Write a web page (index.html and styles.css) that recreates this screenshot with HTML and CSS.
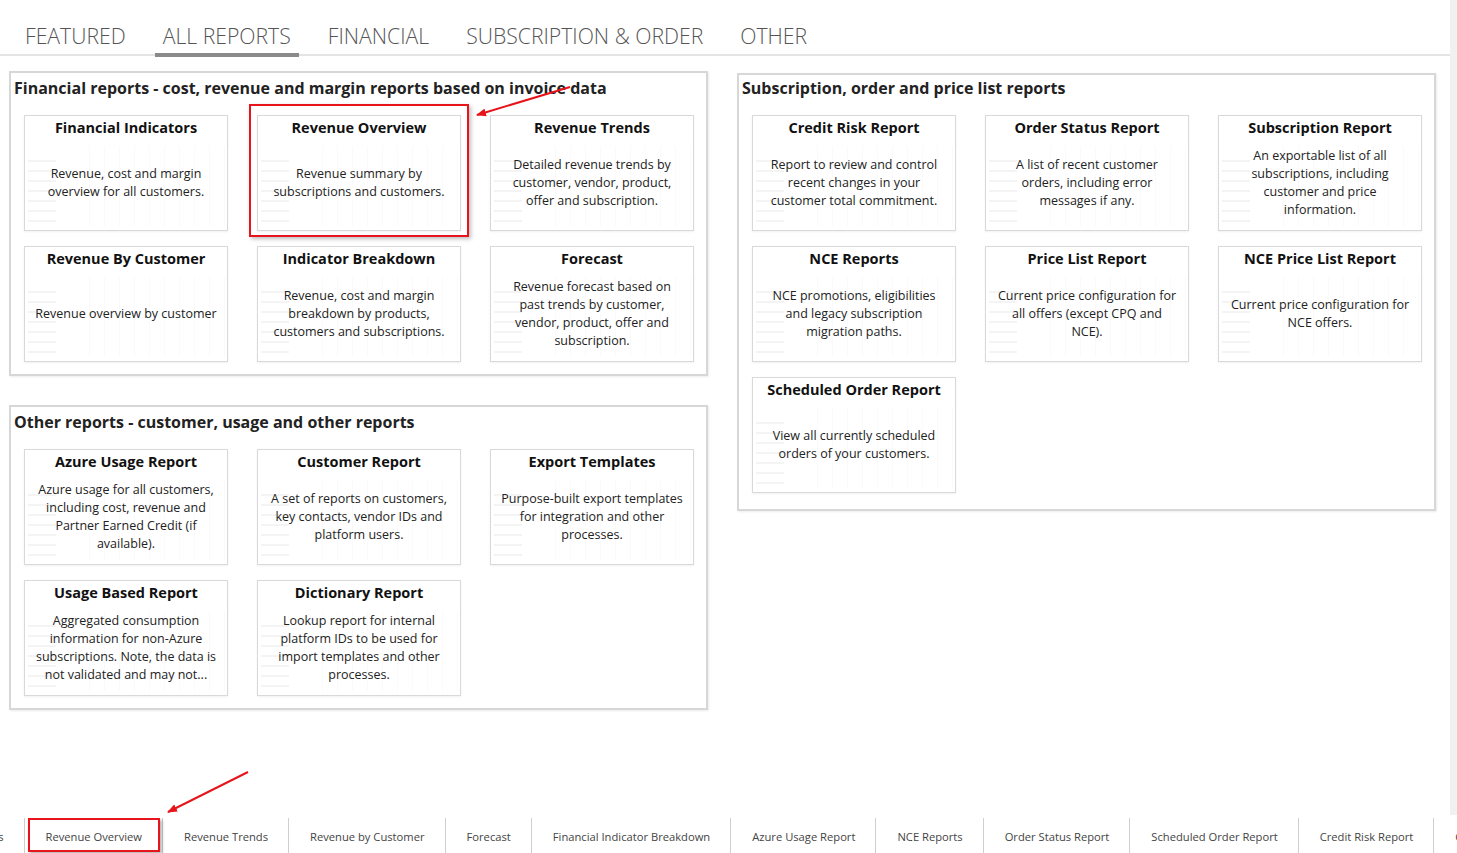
FILE: index.html
```html
<!DOCTYPE html>
<html lang="en">
<head>
    <meta charset="UTF-8">
    <meta name="viewport" content="width=device-width, initial-scale=1.0">
    <link rel="stylesheet" href="styles.css">
</head>
<body>
<div class="page">
    <div class="tabs">
        <span class="tab">FEATURED</span>
        <span class="tab active">ALL REPORTS</span>
        <span class="tab">FINANCIAL</span>
        <span class="tab">SUBSCRIPTION &amp; ORDER</span>
        <span class="tab">OTHER</span>
    </div>

    <div class="main">
        <div class="left-col">
            <div class="panel">
                <h2>Financial reports - cost, revenue and margin reports based on invoice data</h2>
                <div class="cards">
                    <div class="card">
                        <h3>Financial Indicators</h3>
                        <p>Revenue, cost and margin overview for all customers.</p>
                    </div>
                    <div class="card highlight">
                        <h3>Revenue Overview</h3>
                        <p>Revenue summary by subscriptions and customers.</p>
                    </div>
                    <div class="card">
                        <h3>Revenue Trends</h3>
                        <p>Detailed revenue trends by customer, vendor, product, offer and subscription.</p>
                    </div>
                    <div class="card">
                        <h3>Revenue By Customer</h3>
                        <p>Revenue overview by customer</p>
                    </div>
                    <div class="card">
                        <h3>Indicator Breakdown</h3>
                        <p>Revenue, cost and margin breakdown by products, customers and subscriptions.</p>
                    </div>
                    <div class="card">
                        <h3>Forecast</h3>
                        <p>Revenue forecast based on past trends by customer, vendor, product, offer and subscription.</p>
                    </div>
                </div>
            </div>

            <div class="panel">
                <h2>Other reports - customer, usage and other reports</h2>
                <div class="cards">
                    <div class="card">
                        <h3>Azure Usage Report</h3>
                        <p>Azure usage for all customers, including cost, revenue and Partner Earned Credit (if available).</p>
                    </div>
                    <div class="card">
                        <h3>Customer Report</h3>
                        <p>A set of reports on customers, key contacts, vendor IDs and platform users.</p>
                    </div>
                    <div class="card">
                        <h3>Export Templates</h3>
                        <p>Purpose-built export templates for integration and other processes.</p>
                    </div>
                    <div class="card">
                        <h3>Usage Based Report</h3>
                        <p>Aggregated consumption information for non-Azure subscriptions. Note, the data is not validated and may not...</p>
                    </div>
                    <div class="card">
                        <h3>Dictionary Report</h3>
                        <p>Lookup report for internal platform IDs to be used for import templates and other processes.</p>
                    </div>
                </div>
            </div>
        </div>

        <div class="panel right">
            <h2>Subscription, order and price list reports</h2>
            <div class="cards">
                <div class="card">
                    <h3>Credit Risk Report</h3>
                    <p>Report to review and control recent changes in your customer total commitment.</p>
                </div>
                <div class="card">
                    <h3>Order Status Report</h3>
                    <p>A list of recent customer orders, including error messages if any.</p>
                </div>
                <div class="card">
                    <h3>Subscription Report</h3>
                    <p>An exportable list of all subscriptions, including customer and price information.</p>
                </div>
                <div class="card">
                    <h3>NCE Reports</h3>
                    <p>NCE promotions, eligibilities and legacy subscription migration paths.</p>
                </div>
                <div class="card">
                    <h3>Price List Report</h3>
                    <p>Current price configuration for all offers (except CPQ and NCE).</p>
                </div>
                <div class="card">
                    <h3>NCE Price List Report</h3>
                    <p>Current price configuration for NCE offers.</p>
                </div>
                <div class="card">
                    <h3>Scheduled Order Report</h3>
                    <p>View all currently scheduled orders of your customers.</p>
                </div>
            </div>
        </div>
    </div>

    <div class="scrollbar"></div>

    <div class="pages">
        <div class="pages-inner">
            <span class="page-tab">Financial Indicators</span>
            <span class="page-tab highlight">Revenue Overview</span>
            <span class="page-tab">Revenue Trends</span>
            <span class="page-tab">Revenue by Customer</span>
            <span class="page-tab">Forecast</span>
            <span class="page-tab">Financial Indicator Breakdown</span>
            <span class="page-tab">Azure Usage Report</span>
            <span class="page-tab">NCE Reports</span>
            <span class="page-tab">Order Status Report</span>
            <span class="page-tab">Scheduled Order Report</span>
            <span class="page-tab">Credit Risk Report</span>
            <span class="page-tab">Customer Report</span>
        </div>
    </div>

    <!-- annotation arrows drawn over the screenshot -->
    <svg class="arrows" width="1457" height="853" viewBox="0 0 1457 853">
        <defs>
            <marker id="head" markerWidth="10" markerHeight="8" refX="9" refY="4" orient="auto" markerUnits="userSpaceOnUse">
                <path d="M0,0 L10,4 L0,8 Z" fill="#e8141b"/>
            </marker>
        </defs>
        <line x1="570" y1="87" x2="477" y2="115" stroke="#e8141b" stroke-width="2" marker-end="url(#head)"/>
        <line x1="248" y1="772" x2="168" y2="812" stroke="#e8141b" stroke-width="2" marker-end="url(#head)"/>
    </svg>
</div>
</body>
</html>
```

FILE: styles.css
```css
body {
    margin: 0;
    background: #fff;
    font-family: "Open Sans", "Noto Sans", Arial, sans-serif;
    color: #222;
    overflow: hidden;
}

.page {
    position: relative;
    width: 1457px;
    height: 853px;
    overflow: hidden;
}

/* top tabs */
.tabs {
    display: flex;
    padding: 18px 0 0 17px;
    margin-right: 7px;
    border-bottom: 2px solid #e4e4e4;
    height: 36px;
}

.tab {
    font-size: 21.2px;
    font-weight: 300;
    color: #555;
    padding: 0 8px;
    margin-right: 21px;
    line-height: 36px;
    height: 36px;
}

.tab.active {
    border-bottom: 4px solid #8a8a8a;
    height: 35px;
}

/* report panels */
.main {
    display: grid;
    grid-template-columns: 699px 699px;
    column-gap: 29px;
    padding: 15px 0 0 9px;
    align-items: start;
}

.left-col {
    display: flex;
    flex-direction: column;
    gap: 29px;
}

.panel {
    border: 2px solid #d7d7d7;
    box-shadow: 1px 1px 2px rgba(0, 0, 0, 0.08);
    padding: 0 13px 12px 13px;
}

.panel.right {
    margin-top: 2px;
    padding-bottom: 16px;
}

.panel h2 {
    margin: 0 0 16px -10px;
    padding-top: 4px;
    font-size: 16px;
    line-height: 22px;
    font-weight: 700;
    color: #222;
    white-space: nowrap;
}

.panel.right h2 {
    padding-top: 2px;
}

.cards {
    display: grid;
    grid-template-columns: repeat(3, 204px);
    column-gap: 29px;
    row-gap: 15px;
}

.card {
    position: relative;
    height: 116px;
    box-sizing: border-box;
    border: 1px solid #d9d9d9;
    box-shadow: 0 1px 2px rgba(0, 0, 0, 0.06);
    display: flex;
    flex-direction: column;
    background-color: #fff;
    background-image:
        repeating-linear-gradient(to bottom, transparent 0 8px, rgba(0, 0, 0, 0.045) 8px 10px),
        repeating-linear-gradient(to right, transparent 0 14px, rgba(0, 0, 0, 0.02) 14px 15px);
    background-size: 28px 70px, 150px 80px;
    background-position: 3px 36px, 50px 30px;
    background-repeat: no-repeat;
}

.card h3 {
    margin: 0;
    padding-top: 2px;
    font-size: 14.5px;
    line-height: 20px;
    font-weight: 700;
    text-align: center;
    color: #111;
    white-space: nowrap;
}

.card p {
    flex: 1;
    margin: 0;
    padding: 0 10px 2px;
    display: flex;
    align-items: center;
    justify-content: center;
    text-align: center;
    font-size: 12.5px;
    line-height: 18px;
    color: #222;
}

.card.highlight::after {
    content: "";
    position: absolute;
    top: -12px;
    left: -9px;
    right: -9px;
    bottom: -7px;
    border: 2px solid #e8141b;
    box-shadow: 2px 2px 4px rgba(0, 0, 0, 0.25);
}

/* right edge scroll track */
.scrollbar {
    position: absolute;
    top: 0;
    right: 0;
    width: 7px;
    height: 815px;
    background: #f1f1f1;
}

/* bottom page tabs */
.pages {
    position: absolute;
    left: 0;
    right: 0;
    bottom: 0;
    height: 35px;
    overflow: hidden;
}

.pages-inner {
    display: flex;
    margin-left: -118px;
    height: 35px;
}

.page-tab {
    position: relative;
    flex: none;
    padding: 0 20px 0 21px;
    border-right: 1px solid #cfcfcf;
    font-size: 11.2px;
    line-height: 38px;
    color: #444;
    white-space: nowrap;
}

.page-tab.highlight::after {
    content: "";
    position: absolute;
    top: 0;
    left: 3px;
    right: 2px;
    bottom: 1px;
    border: 2px solid #e8141b;
    box-shadow: 2px 2px 3px rgba(0, 0, 0, 0.3);
}

.arrows {
    position: absolute;
    top: 0;
    left: 0;
    pointer-events: none;
}
```
